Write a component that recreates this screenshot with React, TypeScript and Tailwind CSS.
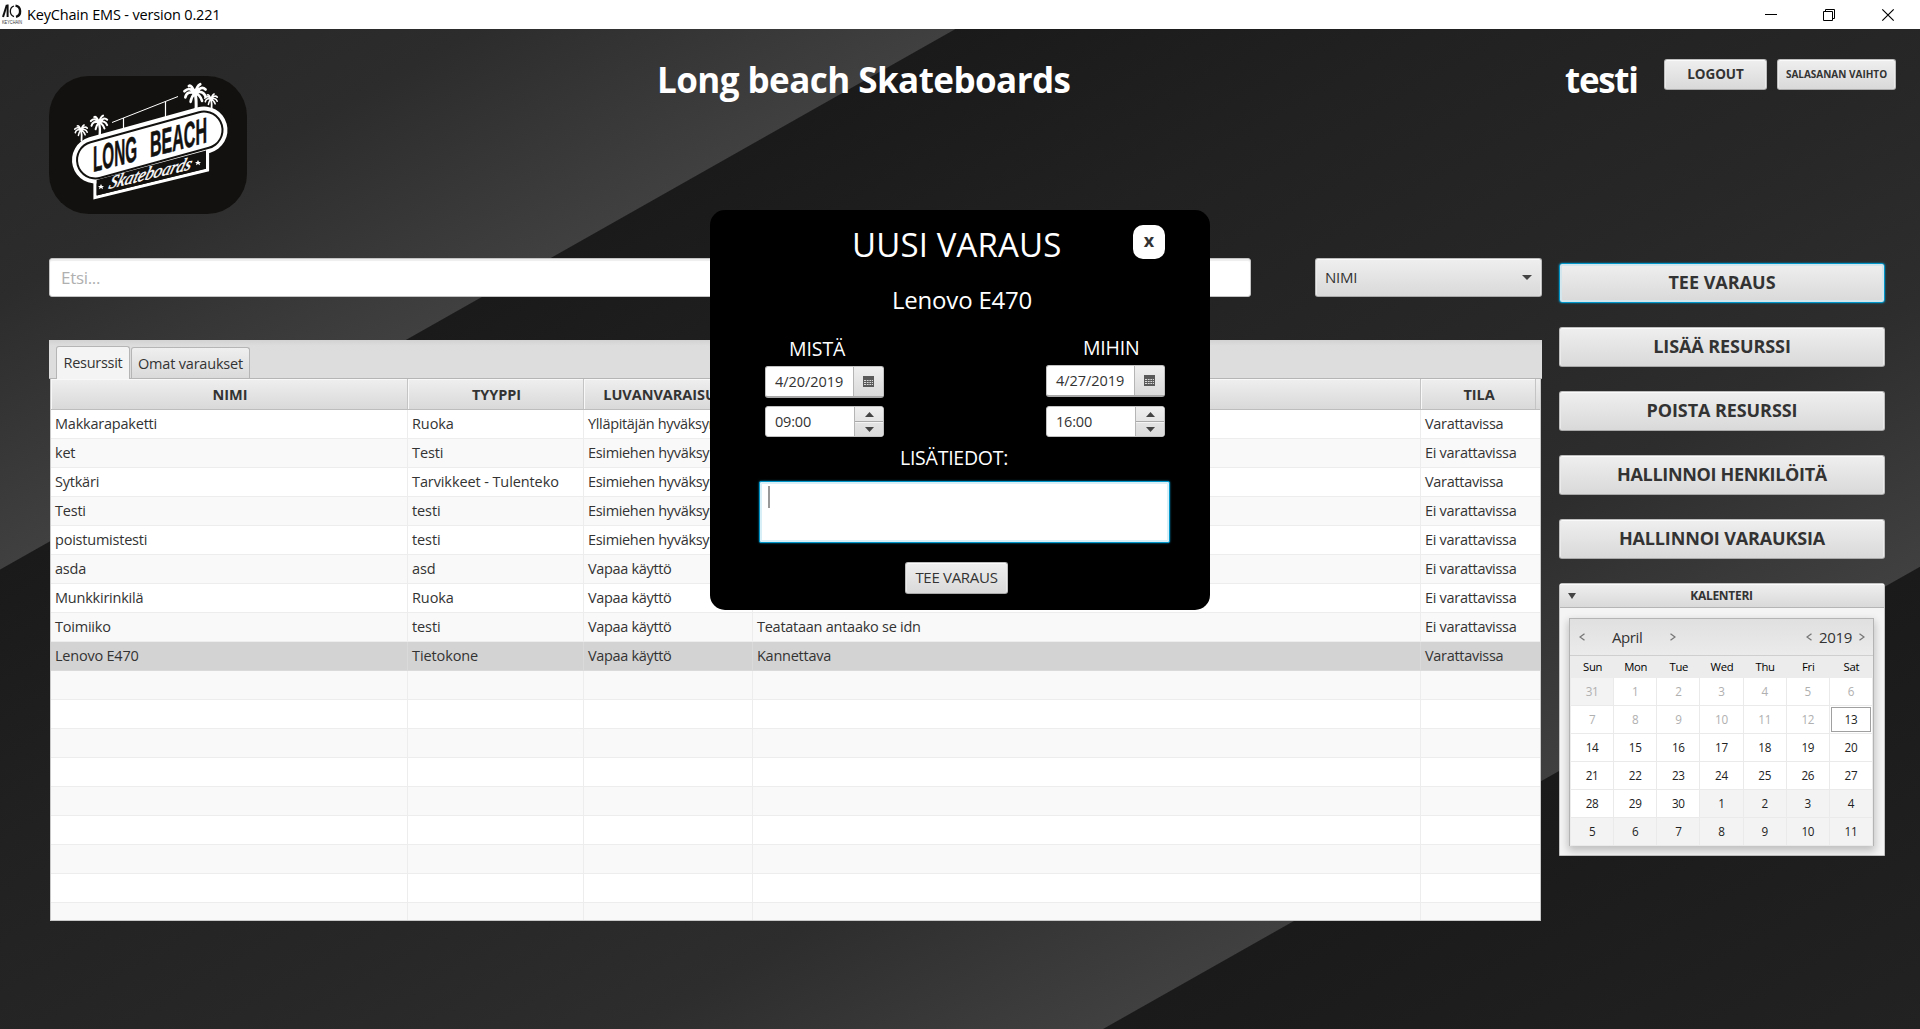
import type { ReactNode } from "react";

const raised =
  "border border-[#bdbdbd] border-b-[#a9a9a9] rounded-[3px] bg-linear-to-b from-[#efefef] to-[#d9d9d9] shadow-[inset_0_1px_0_#fafafa,inset_1px_0_0_#ebebeb,inset_-1px_0_0_#ebebeb] text-[#333]";

function Palm({ x, y, s }: { x: number; y: number; s: number }) {
  return (
    <g transform={`translate(${x} ${y}) scale(${s})`} fill="none" stroke="#fff" strokeLinecap="round">
      <path d="M0 8 Q2 16 1 28" strokeWidth="3.4" />
      <path d="M0 8 Q-6 0 -12 6 M0 8 Q-9 5 -11 13 M0 8 Q-4 12 -5 18 M0 8 Q7 -1 12 4 M0 8 Q9 4 12 12 M0 8 Q6 10 8 17 M0 8 Q-4 -2 -7 0 M0 8 Q2 0 6 -2" strokeWidth="3" />
    </g>
  );
}

function BrandLogo() {
  return (
    <svg className="block h-[138px] w-[198px] overflow-visible" viewBox="49 76 198 138">
      <rect x="49" y="76" width="198" height="138" rx="40" fill="#13110f" />
      <Palm x={81} y={126} s={0.52} />
      <Palm x={99} y={117} s={0.68} />
      <Palm x={195} y={86} s={0.88} />
      <Palm x={211} y={95} s={0.52} />
      <g stroke="#fff" fill="none">
        <path d="M112 122.5 L178 96.5" strokeWidth="1" />
        <path d="M123.5 118 V130 M165.5 101.5 V120" strokeWidth="1.2" />
        <path d="M95 176 V197.5 L207.500 170 V140" strokeWidth="3.2" fill="#13110f" />
      </g>
      <g strokeLinecap="round">
        <path d="M95.500 160 L204 130" stroke="#fff" strokeWidth="47" />
        <path d="M95.500 160 L204 130" stroke="#13110f" strokeWidth="39" />
        <path d="M95.500 160 L204 130" stroke="#fff" strokeWidth="35" />
      </g>
      <path d="M96.600 180 L206 150.500 V168.500 L96.600 195.500 Z" fill="#13110f" />
      <g transform="matrix(1 -0.26 0 1 93 172)" fill="#13110f" stroke="#13110f" strokeWidth="0.6">
        <text x="0" y="0" fontFamily="'Liberation Sans Narrow','Liberation Sans',sans-serif" fontWeight="700" fontSize="36" textLength="44" lengthAdjust="spacingAndGlyphs">LONG</text>
        <text x="57" y="0" fontFamily="'Liberation Sans Narrow','Liberation Sans',sans-serif" fontWeight="700" fontSize="36" textLength="57" lengthAdjust="spacingAndGlyphs">BEACH</text>
      </g>
      <g transform="matrix(1 -0.24 -0.3 1 108 189)" fill="#fff" stroke="#fff" strokeWidth="0.5">
        <text x="0" y="0" fontFamily="'Liberation Serif',serif" fontStyle="italic" fontSize="19" textLength="82" lengthAdjust="spacingAndGlyphs">Skateboards</text>
      </g>
      <path d="M101 184 l1 2 h2 l-1.500 1.300 .5 2 -2 -1.200 -2 1.200 .5 -2 -1.500 -1.300 h2z M198 160 l1 2 h2 l-1.500 1.300 .5 2 -2 -1.200 -2 1.200 .5 -2 -1.500 -1.300 h2z" fill="#fff" />
    </svg>
  );
}

function TitleBar() {
  return (
    <div className="flex h-[29px] shrink-0 items-center bg-white text-black">
      <svg className="ml-[2px] block h-[21px] w-[21px] overflow-visible" viewBox="0 0 21 21">
        <path d="M4.800 1 L1 13" stroke="#111" strokeWidth="2" fill="none" />
        <path d="M5.600 0.500 V13" stroke="#111" strokeWidth="2" fill="none" />
        <path d="M12 2 A5 5.500 0 0 0 12 12.600" stroke="#111" strokeWidth="1.300" fill="none" />
        <path d="M13.500 1.600 A5.300 5.700 0 0 1 14 12.800" stroke="#111" strokeWidth="2.400" fill="none" />
        <text x="0" y="19.800" fontSize="5.200" fontFamily="'Liberation Sans',sans-serif" fill="#333" textLength="20" lengthAdjust="spacingAndGlyphs">KEYCHAIN</text>
      </svg>
      <span className="ml-[4px] text-[14.5px] tracking-[-0.17px]">KeyChain EMS - version 0.221</span>
      <svg className="mr-[25px] ml-auto block h-[14px] w-[132px]" viewBox="0 0 132 14" fill="none" stroke="#000" strokeWidth="1">
        <path d="M2 6.500 H14" />
        <path d="M60.500 3.500 H69.500 V12.500 H60.500 Z M62.500 3.500 V1.500 H71.500 V10.500 H69.500" />
        <path d="M119.300 1.300 L130.700 12.700 M130.700 1.300 L119.300 12.700" strokeWidth="1.200" />
      </svg>
    </div>
  );
}

const cols = "grid grid-cols-[357px_176px_169px_668px_119px]";

const rows: [string, string, string, string, string][] = [
  ["Makkarapaketti", "Ruoka", "Ylläpitäjän hyväksyntä", "", "Varattavissa"],
  ["ket", "Testi", "Esimiehen hyväksyntä", "", "Ei varattavissa"],
  ["Sytkäri", "Tarvikkeet - Tulenteko", "Esimiehen hyväksyntä", "", "Varattavissa"],
  ["Testi", "testi", "Esimiehen hyväksyntä", "", "Ei varattavissa"],
  ["poistumistesti", "testi", "Esimiehen hyväksyntä", "", "Ei varattavissa"],
  ["asda", "asd", "Vapaa käyttö", "", "Ei varattavissa"],
  ["Munkkirinkilä", "Ruoka", "Vapaa käyttö", "", "Ei varattavissa"],
  ["Toimiiko", "testi", "Vapaa käyttö", "Teatataan antaako se idn", "Ei varattavissa"],
  ["Lenovo E470", "Tietokone", "Vapaa käyttö", "Kannettava", "Varattavissa"],
];
const empty = Array.from({ length: 9 }, () => ["", "", "", "", ""]);
const tracks = [
  "tracking-[-0.22px]",
  "tracking-[-0.1px]",
  "tracking-[-0.33px]",
  "tracking-[-0.26px]",
  "tracking-[-0.3px]",
];

function HeadCell({ children, last }: { children?: ReactNode; last?: boolean }) {
  return (
    <div className={`flex items-center justify-center overflow-hidden border-r border-[#c4c4c4] pt-[2px] pl-[2px] shadow-[inset_1px_1px_0_#f8f8f8] ${last ? "mr-[4px]" : ""}`}>
      {children}
    </div>
  );
}

function ResourceTable() {
  return (
    <div className="mx-px h-[542px] overflow-hidden border-x border-b border-[#c8c8c8] bg-white text-[14.5px] text-[#333]">
      <div className={`${cols} h-[31px] border-b border-[#bdbdbd] bg-linear-to-b from-[#efefef] to-[#d9d9d9] text-[14.5px] font-bold tracking-[-0.05px]`}>
        <HeadCell>NIMI</HeadCell>
        <HeadCell>TYYPPI</HeadCell>
        <HeadCell>LUVANVARAISUUS</HeadCell>
        <HeadCell />
        <HeadCell last>TILA</HeadCell>
      </div>
      {[...rows, ...empty].map((r, i) => {
        const selected = i === 8;
        return (
          <div key={i} className={`${cols} h-[29px] ${selected ? "bg-[#d3d3d3]" : i % 2 ? "bg-[#f9f9f9]" : "bg-white"}`}>
            {r.map((c, j) => (
              <div
                key={j}
                className={`flex items-center overflow-hidden border-b pl-[4px] whitespace-nowrap ${j < 4 ? "border-r" : ""} ${selected ? "border-[#dadada]" : "border-[#ededed]"} ${tracks[j]}`}
              >
                {c}
              </div>
            ))}
          </div>
        );
      })}
    </div>
  );
}

const actions: [string, string][] = [
  ["TEE VARAUS", "tracking-normal"],
  ["LISÄÄ RESURSSI", "tracking-[-0.08px]"],
  ["POISTA RESURSSI", "tracking-[-0.08px]"],
  ["HALLINNOI HENKILÖITÄ", "tracking-[-0.33px]"],
  ["HALLINNOI VARAUKSIA", "tracking-[-0.15px]"],
];

const days = [31, ...Array.from({ length: 30 }, (_, i) => i + 1), ...Array.from({ length: 11 }, (_, i) => i + 1)];

function Chevron({ right, className }: { right?: boolean; className?: string }) {
  return (
    <svg className={`block h-[8px] w-[6px] ${className ?? ""}`} viewBox="0 0 6 8" fill="none" stroke="#777" strokeWidth="1.300">
      <path d={right ? "M.5 .7 L5 4 L.5 7.300" : "M5.500 .7 L1 4 L5.500 7.300"} />
    </svg>
  );
}

function CalendarPanel() {
  return (
    <div className="mt-[24px] h-[273px] rounded-t-[3px] border border-[#c2c2c2] bg-[#f4f4f4] text-[#333]">
      <div className="flex h-[24px] items-center border-b border-[#b5b5b5] bg-linear-to-b from-[#efefef] to-[#d9d9d9] shadow-[inset_0_1px_0_#fafafa]">
        <svg className="ml-[8px] block h-[6px] w-[8px]" viewBox="0 0 8 6">
          <path d="M0 0 H8 L4 6 Z" fill="#444" />
        </svg>
        <span className="mr-[17px] flex-1 text-center text-[12px] font-bold tracking-[-0.28px]">KALENTERI</span>
      </div>
      <div className="mx-[9px] mt-[10px] h-[228px] w-[305px] border border-b-0 border-[#b4b4b4] bg-[#ececec] pl-px shadow-[0_4px_8px_1px_#00000038]">
        <div className="-ml-px flex h-[37px] items-center border-b border-[#cfcfcf] bg-linear-to-b from-[#e0e0e0] to-[#ebebeb] text-[15px]">
          <Chevron className="ml-[9px]" />
          <span className="ml-[27px] w-[31px] tracking-[-0.4px]">April</span>
          <Chevron right className="ml-[27px]" />
          <Chevron className="ml-auto" />
          <span className="mx-[7px] tracking-[-0.3px]">2019</span>
          <Chevron right className="mr-[8px]" />
        </div>
        <div className="grid h-[22px] grid-cols-7 items-center text-center text-[11.3px] tracking-[-0.3px] text-black">
          {["Sun", "Mon", "Tue", "Wed", "Thu", "Fri", "Sat"].map((d) => (
            <span key={d}>{d}</span>
          ))}
        </div>
        <div className="grid grid-cols-7 text-[11.7px] tracking-[-0.3px]">
          {days.map((d, i) => {
            const other = i === 0 || i > 30;
            return (
              <div
                key={i}
                className={`flex h-[28px] border-r border-b border-[#eaeaea] ${other ? "bg-[#f3f3f3]" : "bg-white"} ${i < 13 ? "text-[#b0b0b0]" : "text-[#222]"}`}
              >
                <span className={`flex flex-1 items-center justify-center ${i === 13 ? "m-px border border-[#a0a0a0]" : ""}`}>{d}</span>
              </div>
            );
          })}
        </div>
      </div>
    </div>
  );
}

type DateTimeProps = { label: string; date: string; time: string; labelClass: string; timeClass: string; className: string };

function DateTime({ label, date, time, labelClass, timeClass, className }: DateTimeProps) {
  return (
    <div className={`flex w-[119px] flex-col text-[14.5px] text-[#333] ${className}`}>
      <span className={`h-[30px] text-[19.5px] leading-[25px] text-white ${labelClass}`}>{label}</span>
      <div className="flex h-[32px] shrink-0 overflow-hidden rounded-[3px] border border-[#c2c2c2] border-b-2 border-b-[#a9a9a9] bg-white">
        <span className="flex w-[87px] items-center pl-[9px] tracking-[-0.05px]">{date}</span>
        <span className="flex flex-1 items-center justify-center border-l border-[#b5b5b5] bg-linear-to-b from-[#efefef] to-[#dadada]">
          <svg className="block h-[11px] w-[11px]" viewBox="0 0 11 11">
            <rect width="11" height="11" fill="#5a5a5a" />
            <path d="M1 4.500 H10 M1 6.500 H10 M1 8.500 H10" stroke="#d8d8d8" strokeWidth="1" />
            <path d="M3.500 3 V10 M6 3 V10 M8.500 3 V10" stroke="#5a5a5a" strokeWidth="0.800" />
          </svg>
        </span>
      </div>
      <div className={`flex h-[31px] shrink-0 overflow-hidden rounded-[3px] border border-[#c2c2c2] bg-white ${timeClass}`}>
        <span className="flex w-[88px] items-center pl-[9px] tracking-[-0.2px]">{time}</span>
        <span className="flex flex-1 flex-col border-l border-[#b5b5b5] bg-linear-to-b from-[#efefef] to-[#dadada]">
          <span className="flex h-[15px] items-center justify-center border-b border-[#aaa]">
            <svg className="block h-[5px] w-[9px]" viewBox="0 0 9 5"><path d="M0 5 H9 L4.500 0 Z" fill="#444" /></svg>
          </span>
          <span className="flex flex-1 items-center justify-center border-t border-[#f4f4f4]">
            <svg className="block h-[5px] w-[9px]" viewBox="0 0 9 5"><path d="M0 0 H9 L4.500 5 Z" fill="#444" /></svg>
          </span>
        </span>
      </div>
    </div>
  );
}

function BookingDialog() {
  return (
    <div className="absolute top-[210px] left-[710px] flex h-[400px] w-[500px] flex-col rounded-[15px] bg-black text-white">
      <div className="flex h-[70px]">
        <h2 className="ml-[142px] w-[211px] pt-[13px] text-[33px] leading-[44px] tracking-[0.15px] whitespace-nowrap">UUSI VARAUS</h2>
        <button className="mt-[15px] ml-[70px] flex h-[34px] w-[32px] items-center justify-center rounded-[10px] bg-white pb-[3px] text-[18px] font-bold text-[#333]">x</button>
      </div>
      <div className="ml-[182px] h-[54px] pt-[4px] text-[24px] leading-[32px] tracking-[-0.2px]">Lenovo E470</div>
      <div className="flex h-[104px]">
        <DateTime label="MISTÄ" date="4/20/2019" time="09:00" labelClass="ml-[24px] tracking-[-0.1px]" timeClass="mt-[8px]" className="ml-[55px] pt-[2px]" />
        <DateTime label="MIHIN" date="4/27/2019" time="16:00" labelClass="ml-[37px] tracking-[-0.2px]" timeClass="mt-[9px]" className="ml-[162px] pt-px" />
      </div>
      <div className="ml-[190px] h-[43px] pt-[8px] text-[19.5px] leading-[23px] tracking-[-0.25px]">LISÄTIEDOT:</div>
      <div className="mx-[49px] h-[62px] w-[411px] rounded-[2px] border border-[#0096c9] bg-white shadow-[0_0_2px_#0096c9,inset_0_0_0_2px_#d9eff8]">
        <span className="mt-[4px] ml-[8px] block h-[22px] w-[2px] bg-[#999]" />
      </div>
      <button className={`mt-[19px] ml-[195px] h-[32px] w-[103px] pb-[2px] text-[15px] tracking-[-0.3px] ${raised}`}>TEE VARAUS</button>
    </div>
  );
}

export default function App() {
  return (
    <div className="relative flex h-[1029px] w-[1920px] flex-col overflow-hidden font-['Open_Sans','Noto_Sans',sans-serif]">
      <TitleBar />
      <main className="flex-1 bg-[linear-gradient(150.5deg,#262626_0px,#2c2c2c_235px,#404040_470px,#1a1a1a_471px,#212121_710px,#272727_980px,#2d2d2d_1180px,#404040_1413px,#1a1a1a_1414px,#222_1816px)]">
        <header className="flex h-[229px] items-start">
          <div className="mt-[47px] ml-[49px]">
            <BrandLogo />
          </div>
          <h1 className="mt-[28px] ml-[410px] w-[906px] text-[35px] leading-[46px] font-bold tracking-[-0.56px] whitespace-nowrap text-white">Long beach Skateboards</h1>
          <span className="mt-[28px] ml-[2px] w-[99px] text-[35px] leading-[46px] font-bold tracking-[-1.3px] text-white">testi</span>
          <button className={`mt-[30px] h-[31px] w-[103px] text-[13.5px] font-bold tracking-[-0.1px] ${raised}`}>LOGOUT</button>
          <button className={`mt-[30px] ml-[10px] h-[31px] w-[119px] text-[10px] font-bold ${raised}`}>SALASANAN VAIHTO</button>
        </header>
        <div className="flex">
          <section className="ml-[49px] w-[1493px]">
            <div className="flex h-[82px] items-start">
              <div className="flex h-[39px] w-[1202px] items-center rounded-[3px] border border-[#c4c4c4] bg-white pl-[11px] text-[17px] tracking-[-0.3px] text-[#b0b0b0] shadow-[inset_0_2px_1px_#eee]">Etsi...</div>
              <div className={`ml-[64px] flex h-[39px] w-[227px] items-center pr-[9px] pl-[9px] text-[15px] tracking-[-0.2px] ${raised}`}>
                <span className="flex-1">NIMI</span>
                <svg className="block h-[5px] w-[10px]" viewBox="0 0 10 5"><path d="M0 0 H10 L5 5 Z" fill="#444" /></svg>
              </div>
            </div>
            <div className="flex h-[39px] items-end gap-px border-b border-[#b5b5b5] bg-[#ddd] bg-linear-to-b from-[#d2d2d2] to-[#ddd] to-15% pl-[7px] text-[14.5px] text-[#333]">
              <div className="-mb-px flex h-[33px] w-[74px] items-center justify-center rounded-t-[3px] border border-b-0 border-[#b5b5b5] bg-[#f4f4f4] tracking-[-0.3px]">Resurssit</div>
              <div className="flex h-[31px] w-[119px] items-center justify-center rounded-t-[3px] border border-b-0 border-[#b5b5b5] bg-linear-to-b from-[#efefef] to-[#dadada] pt-px tracking-[-0.2px]">Omat varaukset</div>
            </div>
            <ResourceTable />
          </section>
          <aside className="ml-[17px] flex w-[326px] flex-col pt-[5px]">
            <div className="flex flex-col gap-[24px]">
              {actions.map(([t, k], i) => (
                <button
                  key={t}
                  className={`h-[40px] pb-px text-[18px] font-bold ${k} ${i === 0 ? "rounded-[3px] border border-[#0096c9] bg-linear-to-b from-[#efefef] to-[#d9d9d9] text-[#333] shadow-[0_0_2px_#0096c9,inset_0_0_0_2px_#d3e6ee]" : raised}`}
                >
                  {t}
                </button>
              ))}
            </div>
            <CalendarPanel />
          </aside>
        </div>
      </main>
      <BookingDialog />
    </div>
  );
}
